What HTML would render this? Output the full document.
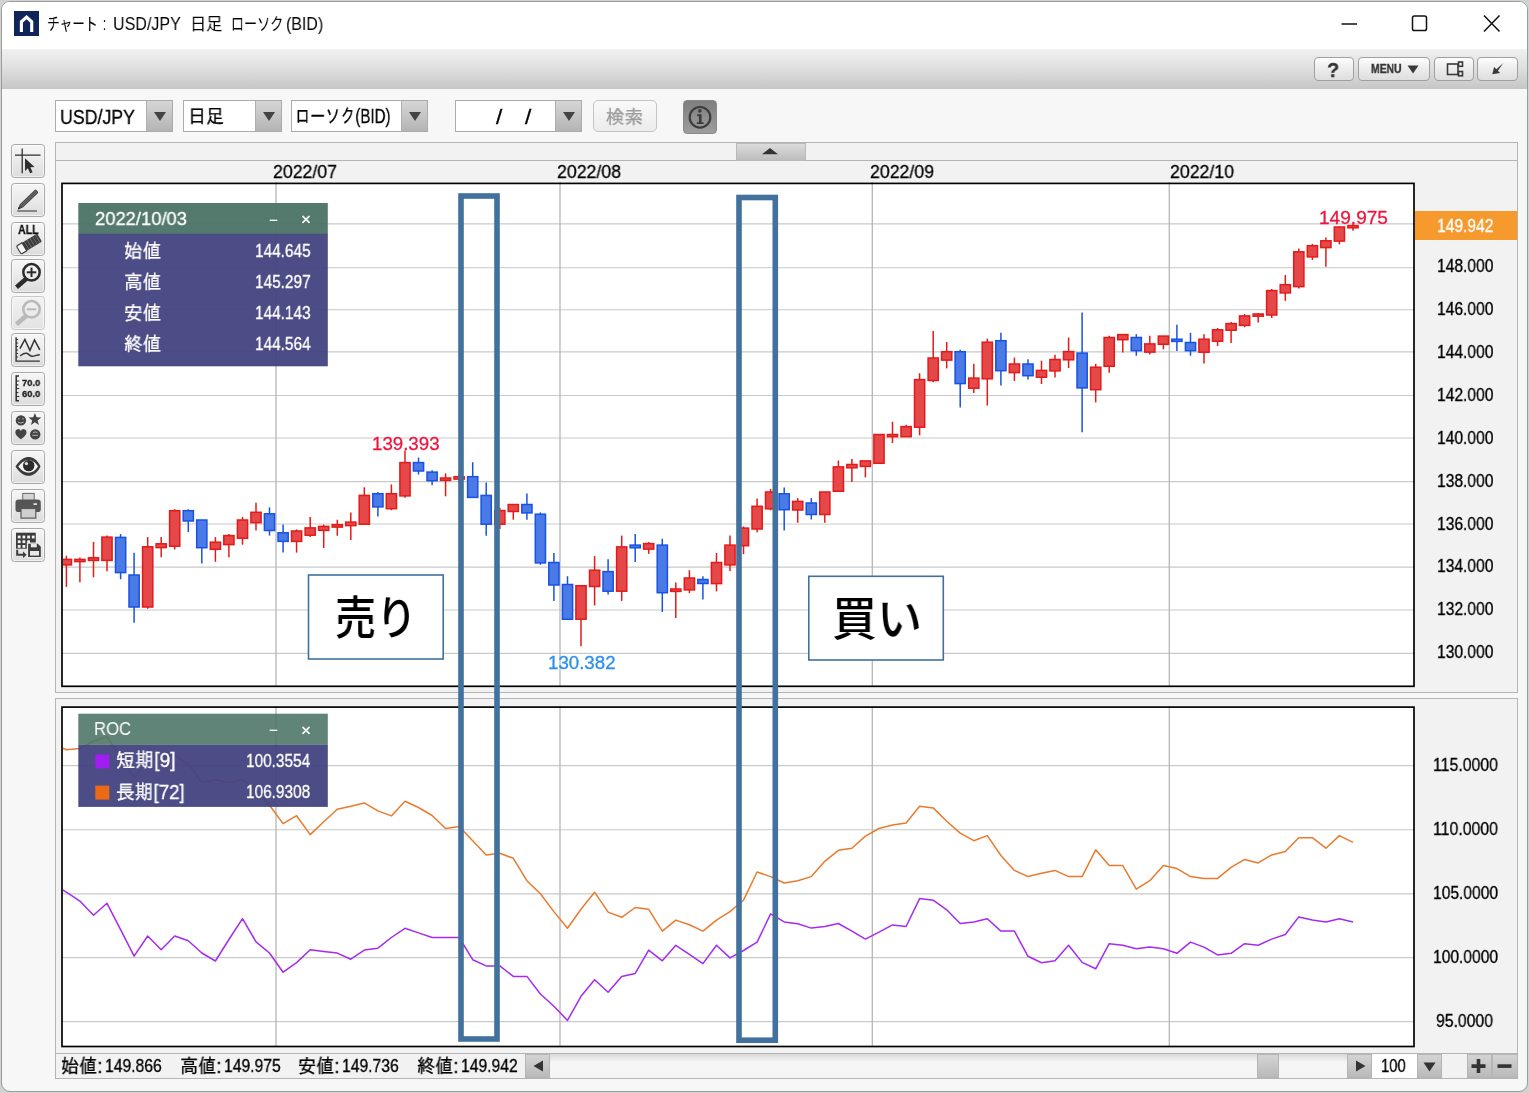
<!DOCTYPE html>
<html lang="ja"><head><meta charset="utf-8"><title>チャート</title>
<style>
html,body{margin:0;padding:0}
body{width:1529px;height:1093px;overflow:hidden;background:#d2d2d2;position:relative;font-family:'Liberation Sans','IPAGothic',sans-serif}
.win{position:absolute;left:1px;top:1px;width:1525px;height:1089px;border:1px solid #9c9c9c;border-radius:9px;background:#f7f7f7;overflow:hidden;box-sizing:content-box}
.abs{position:absolute}
.tx{position:absolute;white-space:pre;transform-origin:0 50%;display:block;will-change:transform}
.title{left:0;top:0;width:1527px;height:47px;background:#fff}
.tbar{left:0;top:47px;width:1527px;height:40px;background:linear-gradient(#f1f1f1,#dfdfdf 48%,#c6c6c6)}
.panel{background:#f2f2f2;border:1px solid #b4b4b4;box-sizing:border-box}
.sel{position:absolute;top:100px;height:32px;background:#fff;border:1px solid #ababab;box-sizing:border-box}
.sel i{position:absolute;right:0;top:0;bottom:0;width:25px;background:linear-gradient(#d6d6d6,#b4b4b4);border-left:1px solid #b0b0b0}
.sel i:after{content:"";position:absolute;left:7px;top:11px;border:6px solid transparent;border-top:9px solid #444;border-bottom:0}
.btn{position:absolute;box-sizing:border-box;border:1px solid #a0a0a0;border-radius:4px;background:linear-gradient(#fdfdfd,#ececec 50%,#dedede)}
.lb{position:absolute;left:11px;width:34px;height:34px;box-sizing:border-box;border:1px solid #a9a9a9;border-radius:3.5px;background:linear-gradient(#f6f6f6,#eaeaea 50%,#dcdcdc);box-shadow:inset 0 0 0 1px rgba(255,255,255,.55)}
.lb.dis{border-color:#c6c6c6;background:linear-gradient(#f2f2f2,#e2e2e2)}
.tx.g{-webkit-text-stroke:0.3px currentColor}
.sb{position:absolute;top:1054px;height:24px;box-sizing:border-box;background:linear-gradient(#d4d4d4,#b9b9b9);border:1px solid #b5b5b5}
</style></head><body>
<div class="win">
<div class="abs title"></div>
<div class="abs tbar"></div>
</div>
<!-- app icon -->
<svg class="abs" style="left:14px;top:11px" width="25" height="25" viewBox="0 0 25 25"><rect width="25" height="25" fill="#10265a"/><path d="M7.400 21V10.800L12.550 6.200L17.700 10.800V21" fill="none" stroke="#fff" stroke-width="3.100" stroke-linejoin="miter"/></svg>
<!-- window controls -->
<svg class="abs" style="left:1330px;top:8px" width="180" height="32" viewBox="0 0 180 32"><g fill="none" stroke="#111" stroke-width="1.5"><path d="M11.5 16H27"/><rect x="82.5" y="8" width="14" height="14.5" rx="1.8"/><path d="M154 7.5L169.5 23.5M169.5 7.5L154 23.5"/></g></svg>
<!-- top right buttons -->
<div class="btn" style="left:1314px;top:57px;width:40px;height:24px"></div>
<div class="btn" style="left:1358px;top:57px;width:72px;height:24px"></div>
<div class="btn" style="left:1434px;top:57px;width:40px;height:24px"></div>
<div class="btn" style="left:1477px;top:57px;width:41px;height:24px"></div>
<svg class="abs" style="left:1400px;top:57px" width="120" height="24" viewBox="0 0 120 24"><path d="M7.500 8.500h11l-5.500 8z" fill="#3a3a3a"/><g fill="none" stroke="#3a3a3a" stroke-width="1.6"><rect x="47.5" y="7" width="10.5" height="10.5"/><rect x="58.5" y="5" width="4" height="4.3"/><rect x="58.5" y="14.5" width="4" height="4.3"/></g><path d="M92.300 17.300l1.800-7.300 2.300 2.300 6.900-6.300-5.400 7.800 2.200 2.200z" fill="#3a3a3a"/></svg>
<!-- selects -->
<div class="sel" style="left:55px;width:118px"><i></i></div>
<div class="sel" style="left:183px;width:99px"><i></i></div>
<div class="sel" style="left:291px;width:137px"><i></i></div>
<div class="sel" style="left:455px;width:127px"><i></i></div>
<div class="btn" style="left:593px;top:100px;width:64px;height:32px;border-color:#c4c4c4;border-radius:5px;background:linear-gradient(#f9f9f9,#ececec)"></div>
<div class="abs" style="left:683px;top:100px;width:34px;height:34px;border-radius:4px;background:linear-gradient(#7e7e7e,#9d9d9d);border:1px solid #8a8a8a;box-sizing:border-box"></div>
<svg class="abs" style="left:683px;top:100px" width="34" height="34" viewBox="0 0 34 34"><circle cx="17" cy="17.3" r="10.3" fill="none" stroke="#3c3c3c" stroke-width="2.2"/><path d="M14 14.2h4.6v8h2v1.8h-6.8v-1.8h2.1v-6.2h-1.9z" fill="#3c3c3c"/><circle cx="16.9" cy="10.9" r="1.8" fill="#3c3c3c"/></svg>
<!-- left toolbar -->
<div class="lb" style="top:144px"><svg width="34" height="34" viewBox="0 0 34 34" style="position:absolute;left:-1px;top:-1px"><g stroke="#2e2e2e" stroke-width="1.3" fill="none"><path d="M4 11.2H29.5M11.2 4.4V29.2"/></g><path d="M14 14.300V27l2.900-2.700 2.200 5 2.500-1.100-2.200-4.900 4.100-.200z" fill="#2e2e2e"/></svg></div><div class="lb" style="top:183px"><svg width="34" height="34" viewBox="0 0 34 34" style="position:absolute;left:-1px;top:-1px"><g transform="translate(6.8,26.4) rotate(-44)"><path d="M0 0L5 -2.3H25.300a1.6 1.6 0 0 1 1.6 1.6V0.700a1.6 1.6 0 0 1 -1.6 1.6H5z" fill="#4a4a4a"/><path d="M5 -0.800H26M5 0.800H26" stroke="#8a8a8a" stroke-width="0.600"/><path d="M0 0L2.6 -1.2V1.2z" fill="#222"/></g><path d="M6.200 28H26" stroke="#555" stroke-width="1.3"/></svg></div><div class="lb" style="top:222px"><svg width="34" height="34" viewBox="0 0 34 34" style="position:absolute;left:-1px;top:-1px"><g transform="translate(17.500,22.300) rotate(-31) scale(1.08,1.3)"><rect x="-10.500" y="-3.600" width="22.500" height="7.200" rx="1.200" fill="#3c3c3c"/><path d="M-2 -3.600V3.600M1 -3.600V3.600M4 -3.600V3.600M7 -3.600V3.600M10 -3.600V3.600" stroke="#777" stroke-width="0.700"/><path d="M-10.500 -2.400a1.200 1.200 0 0 1 1.200 -1.200H-4.500V3.600H-9.300a1.200 1.200 0 0 1 -1.200 -1.200z" fill="#f4f4f4" stroke="#3c3c3c" stroke-width="1"/></g></svg></div><div class="lb" style="top:259px"><svg width="34" height="34" viewBox="0 0 34 34" style="position:absolute;left:-1px;top:-1px"><path d="M15.300 19.800L5.500 28.200" stroke="#2b2b2b" stroke-width="4.600" stroke-linecap="butt"/><circle cx="20.500" cy="13.300" r="8.200" fill="none" stroke="#2b2b2b" stroke-width="2.500"/><path d="M15.800 13.300H25.200" stroke="#2b2b2b" stroke-width="2"/><path d="M20.500 8.600V18" stroke="#2b2b2b" stroke-width="2"/></svg></div><div class="lb dis" style="top:296px"><svg width="34" height="34" viewBox="0 0 34 34" style="position:absolute;left:-1px;top:-1px"><path d="M15.300 19.800L5.500 28.200" stroke="#b9b9b9" stroke-width="4.600" stroke-linecap="butt"/><circle cx="20.500" cy="13.300" r="8.200" fill="none" stroke="#b9b9b9" stroke-width="2.500"/><path d="M15.800 13.300H25.200" stroke="#b9b9b9" stroke-width="2"/></svg></div><div class="lb" style="top:333px"><svg width="34" height="34" viewBox="0 0 34 34" style="position:absolute;left:-1px;top:-1px"><g fill="none" stroke="#333" stroke-width="1.500"><path d="M5.100 4.200V28.100H28.800" stroke-width="1.400"/><path d="M5.100 6.500h2M5.100 10h2M5.100 13.500h2M5.100 17h2M5.100 20.500h2M5.100 24h2" stroke-width="1"/><path d="M9 15.700L13.900 6.400L18.900 17.400L23.500 6.900L28.800 16.800"/><path d="M9 22.900C11 21.500 13 19.800 15.500 20.300S19 23.600 21.500 23.300S26 21.800 28.800 21.800" stroke-width="1.400"/></g></svg></div><div class="lb" style="top:372px"><svg width="34" height="34" viewBox="0 0 34 34" style="position:absolute;left:-1px;top:-1px"><g fill="none" stroke="#2e2e2e"><path d="M8 4H5.200V28.800H8" stroke-width="1.500"/><path d="M5.200 9h3M5.200 12.800h2.200M5.200 16.500h3M5.200 20.500h2.200M5.200 24.500h3" stroke-width="1.200"/></g></svg></div><div class="lb" style="top:411px"><svg width="34" height="34" viewBox="0 0 34 34" style="position:absolute;left:-1px;top:-1px"><g transform="translate(0,-2.700)"><g fill="#444"><circle cx="9.900" cy="12.100" r="5.200"/><path d="M23.900 4.600l1.700 4.400 4.700.2-3.700 2.900 1.300 4.500-4-2.600-4 2.600 1.300-4.500-3.700-2.900 4.700-.2z"/><path d="M9.900 31c-3.500-2.700-5.600-4.700-5.600-7.100a2.900 2.900 0 0 1 5.600-1.200a2.900 2.900 0 0 1 5.600 1.200c0 2.400-2.100 4.400-5.600 7.100z"/><circle cx="24.200" cy="26.100" r="5.200"/></g><g stroke="#bdbdbd" stroke-width="0.900" fill="none"><path d="M7 13.800q2.900 2 5.800 0M7 10.500h1.600M11.200 10.500h1.600"/><path d="M21.300 27h5.800M22 24.300q2.200-1.400 4.400 0"/></g></g></svg></div><div class="lb" style="top:450px"><svg width="34" height="34" viewBox="0 0 34 34" style="position:absolute;left:-1px;top:-1px"><path d="M4.500 16.500C9 9.200 14 7 17.500 7S26.500 9.200 29.500 16.500C26.500 22.800 22 25.800 17.500 25.800S8.500 22.800 4.500 16.500z" fill="#3a3a3a"/><path d="M7.300 16.600C10.500 12 14 10.300 17.500 10.300S24.500 12 27 16.600C24.500 20.800 21 22.800 17.500 22.800S10.500 20.800 7.300 16.600z" fill="#f4f4f4"/><circle cx="17.700" cy="15.600" r="5.700" fill="#2c2c2c"/><circle cx="15.400" cy="13.600" r="1.700" fill="#ddd"/></svg></div><div class="lb" style="top:489px"><svg width="34" height="34" viewBox="0 0 34 34" style="position:absolute;left:-1px;top:-1px"><rect x="11.700" y="4.400" width="11.500" height="9" fill="#d4d4d4" stroke="#6a6a6a" stroke-width="1"/><rect x="4.500" y="10.600" width="25.300" height="12.500" rx="3.200" fill="#555"/><rect x="10" y="19.500" width="14.800" height="9.600" fill="#cfcfcf" stroke="#5a5a5a" stroke-width="1.200"/><rect x="22.500" y="14.300" width="3.500" height="1.600" fill="#eee"/></svg></div><div class="lb" style="top:528px"><svg width="34" height="34" viewBox="0 0 34 34" style="position:absolute;left:-1px;top:-1px"><rect x="5" y="4.700" width="19.800" height="16" fill="#3c3c3c"/><g fill="#f2f2f2"><rect x="6.800" y="7.600" width="2.800" height="2.800"/><rect x="11.500" y="7.600" width="2.800" height="2.800"/><rect x="16.200" y="7.600" width="2.800" height="2.800"/><rect x="20.800" y="7.600" width="2.800" height="2.800"/><rect x="6.800" y="12.300" width="2.800" height="2.800"/><rect x="11.500" y="12.300" width="2.800" height="2.800"/><rect x="16.200" y="12.300" width="2.800" height="2.800"/><rect x="6.800" y="17" width="2.800" height="2.800"/><rect x="11.500" y="17" width="2.800" height="2.800"/></g><rect x="15.800" y="14.500" width="15" height="15.500" fill="#ececec"/><path d="M17.100 15.700h9.700l3 3v10.200h-12.700z" fill="#3c3c3c"/><rect x="19.800" y="15.700" width="6" height="3.600" fill="#e8e8e8"/><rect x="19" y="23" width="9" height="4.600" fill="#e8e8e8"/><path d="M7.200 21.800v4h4.800v-2.300l3.600 3.300-3.600 3.300v-2.300H5.200v-6z" fill="#3c3c3c"/></svg></div>
<!-- panels -->
<div class="abs panel" style="left:55px;top:142px;width:1463px;height:551px"></div>
<div class="abs" style="left:56px;top:160px;width:1461px;height:1px;background:#b4b4b4"></div>
<div class="abs" style="left:736px;top:143px;width:70px;height:18px;background:linear-gradient(#dcdcdc,#bdbdbd);border:1px solid #b9b9b9;box-sizing:border-box"></div>
<svg class="abs" style="left:758px;top:145px" width="24" height="12" viewBox="0 0 24 12"><path d="M4 9.300L12 2.900L20 9.300z" fill="#333"/></svg>
<div class="abs panel" style="left:55px;top:698px;width:1463px;height:355px;border-bottom:0"></div>
<div class="abs" style="left:1415px;top:211px;width:102px;height:29px;background:#f79a2e"></div>
<!-- status/scroll bar -->
<div class="abs panel" style="left:55px;top:1053px;width:1463px;height:26px"></div>
<div class="abs" style="left:550px;top:1054px;width:798px;height:24px;background:linear-gradient(#d9d9d9,#f6f6f6 35%,#f4f4f4)"></div>
<div class="sb" style="left:525px;width:25px"></div>
<div class="sb" style="left:1257px;width:22px"></div>
<div class="sb" style="left:1347px;width:25px"></div>
<div class="abs" style="left:1372px;top:1054px;width:45px;height:24px;background:#fff"></div>
<div class="sb" style="left:1417px;width:25px"></div>
<div class="sb" style="left:1467px;width:25px"></div>
<div class="sb" style="left:1492px;width:26px"></div>
<svg class="abs" style="left:525px;top:1054px" width="993" height="24" viewBox="0 0 993 24"><g fill="#333"><path d="M18 6.5v11l-9.5-5.5z"/><path d="M831 6.5v11l9.5-5.500z"/><path d="M898.500 8.500h12l-6 9z"/><path d="M946.500 10.300h5.200v-5.200h3.600v5.200h5.200v3.600h-5.200v5.200h-3.600v-5.200h-5.200z"/><rect x="972.500" y="10.300" width="14" height="3.600"/></g></svg>
<!-- charts -->
<svg class="abs" style="left:0;top:0;z-index:2" width="1529" height="1093" viewBox="0 0 1529 1093">
<defs><clipPath id="c1"><rect x="63" y="184" width="1351" height="502"/></clipPath><clipPath id="c2"><rect x="63" y="708" width="1351" height="338"/></clipPath></defs>
<rect x="61" y="182" width="1354" height="505" fill="#fff"/>
<line x1="61" x2="1415" y1="653.3" y2="653.3" stroke="#c9c9c9" stroke-width="1.15"/>
<line x1="61" x2="1415" y1="610.0" y2="610.0" stroke="#c9c9c9" stroke-width="1.15"/>
<line x1="61" x2="1415" y1="567.1" y2="567.1" stroke="#c9c9c9" stroke-width="1.15"/>
<line x1="61" x2="1415" y1="524.0" y2="524.0" stroke="#c9c9c9" stroke-width="1.15"/>
<line x1="61" x2="1415" y1="481.6" y2="481.6" stroke="#c9c9c9" stroke-width="1.15"/>
<line x1="61" x2="1415" y1="438.0" y2="438.0" stroke="#c9c9c9" stroke-width="1.15"/>
<line x1="61" x2="1415" y1="395.5" y2="395.5" stroke="#c9c9c9" stroke-width="1.15"/>
<line x1="61" x2="1415" y1="351.9" y2="351.9" stroke="#c9c9c9" stroke-width="1.15"/>
<line x1="61" x2="1415" y1="309.7" y2="309.7" stroke="#c9c9c9" stroke-width="1.15"/>
<line x1="61" x2="1415" y1="267.7" y2="267.7" stroke="#c9c9c9" stroke-width="1.15"/>
<line x1="61" x2="1415" y1="223.9" y2="223.9" stroke="#c9c9c9" stroke-width="1.15"/>
<line x1="276.0" x2="276.0" y1="182" y2="687" stroke="#b6b6b6" stroke-width="1.3"/>
<line x1="560.0" x2="560.0" y1="182" y2="687" stroke="#b6b6b6" stroke-width="1.3"/>
<line x1="872.3" x2="872.3" y1="182" y2="687" stroke="#b6b6b6" stroke-width="1.3"/>
<line x1="1169.3" x2="1169.3" y1="182" y2="687" stroke="#b6b6b6" stroke-width="1.3"/>
<rect x="61" y="706" width="1354" height="341" fill="#fff"/>
<line x1="61" x2="1415" y1="765.6" y2="765.6" stroke="#c9c9c9" stroke-width="1.15"/>
<line x1="61" x2="1415" y1="829.7" y2="829.7" stroke="#c9c9c9" stroke-width="1.15"/>
<line x1="61" x2="1415" y1="893.8" y2="893.8" stroke="#c9c9c9" stroke-width="1.15"/>
<line x1="61" x2="1415" y1="957.6" y2="957.6" stroke="#c9c9c9" stroke-width="1.15"/>
<line x1="61" x2="1415" y1="1021.6" y2="1021.6" stroke="#c9c9c9" stroke-width="1.15"/>
<line x1="276.0" x2="276.0" y1="706" y2="1047" stroke="#b6b6b6" stroke-width="1.3"/>
<line x1="560.0" x2="560.0" y1="706" y2="1047" stroke="#b6b6b6" stroke-width="1.3"/>
<line x1="872.3" x2="872.3" y1="706" y2="1047" stroke="#b6b6b6" stroke-width="1.3"/>
<line x1="1169.3" x2="1169.3" y1="706" y2="1047" stroke="#b6b6b6" stroke-width="1.3"/>
<g clip-path="url(#c1)">
<line x1="66.4" x2="66.4" y1="555.7" y2="586.9" stroke="#e41a1a" stroke-width="1.5"/>
<rect x="61.3" y="559.4" width="10.2" height="5.5" fill="#e44848" stroke="#e41a1a" stroke-width="1.5"/>
<line x1="79.9" x2="79.9" y1="557.6" y2="582.3" stroke="#e41a1a" stroke-width="1.5"/>
<rect x="74.8" y="559.4" width="10.2" height="2.2" fill="#e44848" stroke="#e41a1a" stroke-width="1.5"/>
<line x1="93.5" x2="93.5" y1="541.8" y2="577.3" stroke="#e41a1a" stroke-width="1.5"/>
<rect x="88.4" y="557.8" width="10.2" height="2.6" fill="#e44848" stroke="#e41a1a" stroke-width="1.5"/>
<line x1="107.0" x2="107.0" y1="535.6" y2="571.3" stroke="#e41a1a" stroke-width="1.5"/>
<rect x="101.9" y="537.1" width="10.2" height="23.3" fill="#e44848" stroke="#e41a1a" stroke-width="1.5"/>
<line x1="120.6" x2="120.6" y1="534.1" y2="579.2" stroke="#1852e4" stroke-width="1.5"/>
<rect x="115.5" y="537.4" width="10.2" height="35.2" fill="#4a7ae5" stroke="#1852e4" stroke-width="1.5"/>
<line x1="134.1" x2="134.1" y1="552.8" y2="622.8" stroke="#1852e4" stroke-width="1.5"/>
<rect x="129.0" y="575.0" width="10.2" height="32.0" fill="#4a7ae5" stroke="#1852e4" stroke-width="1.5"/>
<line x1="147.7" x2="147.7" y1="537.1" y2="608.8" stroke="#e41a1a" stroke-width="1.5"/>
<rect x="142.6" y="546.8" width="10.2" height="60.2" fill="#e44848" stroke="#e41a1a" stroke-width="1.5"/>
<line x1="161.2" x2="161.2" y1="537.1" y2="557.2" stroke="#e41a1a" stroke-width="1.5"/>
<rect x="156.1" y="543.8" width="10.2" height="3.8" fill="#e44848" stroke="#e41a1a" stroke-width="1.5"/>
<line x1="174.7" x2="174.7" y1="509.2" y2="549.5" stroke="#e41a1a" stroke-width="1.5"/>
<rect x="169.6" y="510.7" width="10.2" height="35.5" fill="#e44848" stroke="#e41a1a" stroke-width="1.5"/>
<line x1="188.3" x2="188.3" y1="509.2" y2="532.1" stroke="#1852e4" stroke-width="1.5"/>
<rect x="183.2" y="510.7" width="10.2" height="10.3" fill="#4a7ae5" stroke="#1852e4" stroke-width="1.5"/>
<line x1="201.8" x2="201.8" y1="520.0" y2="563.6" stroke="#1852e4" stroke-width="1.5"/>
<rect x="196.7" y="520.0" width="10.2" height="27.7" fill="#4a7ae5" stroke="#1852e4" stroke-width="1.5"/>
<line x1="215.4" x2="215.4" y1="537.1" y2="561.8" stroke="#e41a1a" stroke-width="1.5"/>
<rect x="210.3" y="542.2" width="10.2" height="7.1" fill="#e44848" stroke="#e41a1a" stroke-width="1.5"/>
<line x1="228.9" x2="228.9" y1="534.1" y2="557.2" stroke="#e41a1a" stroke-width="1.5"/>
<rect x="223.8" y="535.6" width="10.2" height="9.0" fill="#e44848" stroke="#e41a1a" stroke-width="1.5"/>
<line x1="242.5" x2="242.5" y1="516.9" y2="544.7" stroke="#e41a1a" stroke-width="1.5"/>
<rect x="237.4" y="520.0" width="10.2" height="18.3" fill="#e44848" stroke="#e41a1a" stroke-width="1.5"/>
<line x1="256.0" x2="256.0" y1="502.8" y2="530.6" stroke="#e41a1a" stroke-width="1.5"/>
<rect x="250.9" y="512.3" width="10.2" height="10.4" fill="#e44848" stroke="#e41a1a" stroke-width="1.5"/>
<line x1="269.5" x2="269.5" y1="507.4" y2="535.6" stroke="#1852e4" stroke-width="1.5"/>
<rect x="264.4" y="513.8" width="10.2" height="16.7" fill="#4a7ae5" stroke="#1852e4" stroke-width="1.5"/>
<line x1="283.1" x2="283.1" y1="524.6" y2="552.6" stroke="#1852e4" stroke-width="1.5"/>
<rect x="278.0" y="532.8" width="10.2" height="8.6" fill="#4a7ae5" stroke="#1852e4" stroke-width="1.5"/>
<line x1="296.6" x2="296.6" y1="529.4" y2="552.6" stroke="#e41a1a" stroke-width="1.5"/>
<rect x="291.5" y="531.0" width="10.2" height="10.4" fill="#e44848" stroke="#e41a1a" stroke-width="1.5"/>
<line x1="310.2" x2="310.2" y1="516.9" y2="537.1" stroke="#e41a1a" stroke-width="1.5"/>
<rect x="305.1" y="527.9" width="10.2" height="7.3" fill="#e44848" stroke="#e41a1a" stroke-width="1.5"/>
<line x1="323.7" x2="323.7" y1="524.6" y2="548.0" stroke="#e41a1a" stroke-width="1.5"/>
<rect x="318.6" y="526.4" width="10.2" height="4.0" fill="#e44848" stroke="#e41a1a" stroke-width="1.5"/>
<line x1="337.3" x2="337.3" y1="519.7" y2="535.7" stroke="#e41a1a" stroke-width="1.5"/>
<rect x="332.2" y="524.7" width="10.2" height="2.4" fill="#e44848" stroke="#e41a1a" stroke-width="1.5"/>
<line x1="350.8" x2="350.8" y1="512.4" y2="539.9" stroke="#e41a1a" stroke-width="1.5"/>
<rect x="345.7" y="522.1" width="10.2" height="3.5" fill="#e44848" stroke="#e41a1a" stroke-width="1.5"/>
<line x1="364.3" x2="364.3" y1="487.3" y2="524.1" stroke="#e41a1a" stroke-width="1.5"/>
<rect x="359.2" y="495.4" width="10.2" height="28.8" fill="#e44848" stroke="#e41a1a" stroke-width="1.5"/>
<line x1="377.9" x2="377.9" y1="491.9" y2="516.4" stroke="#1852e4" stroke-width="1.5"/>
<rect x="372.8" y="493.7" width="10.2" height="13.2" fill="#4a7ae5" stroke="#1852e4" stroke-width="1.5"/>
<line x1="391.4" x2="391.4" y1="484.4" y2="510.2" stroke="#e41a1a" stroke-width="1.5"/>
<rect x="386.3" y="493.7" width="10.2" height="15.0" fill="#e44848" stroke="#e41a1a" stroke-width="1.5"/>
<line x1="405.0" x2="405.0" y1="450.5" y2="497.8" stroke="#e41a1a" stroke-width="1.5"/>
<rect x="399.9" y="462.6" width="10.2" height="33.3" fill="#e44848" stroke="#e41a1a" stroke-width="1.5"/>
<line x1="418.5" x2="418.5" y1="457.5" y2="474.5" stroke="#1852e4" stroke-width="1.5"/>
<rect x="413.4" y="462.6" width="10.2" height="8.4" fill="#4a7ae5" stroke="#1852e4" stroke-width="1.5"/>
<line x1="432.1" x2="432.1" y1="470.3" y2="485.3" stroke="#1852e4" stroke-width="1.5"/>
<rect x="427.0" y="472.1" width="10.2" height="8.6" fill="#4a7ae5" stroke="#1852e4" stroke-width="1.5"/>
<line x1="445.6" x2="445.6" y1="473.4" y2="496.3" stroke="#e41a1a" stroke-width="1.5"/>
<rect x="440.5" y="478.0" width="10.2" height="2.4" fill="#e44848" stroke="#e41a1a" stroke-width="1.5"/>
<line x1="459.1" x2="459.1" y1="474.0" y2="483.1" stroke="#e41a1a" stroke-width="1.5"/>
<rect x="454.0" y="476.7" width="10.2" height="2.4" fill="#e44848" stroke="#e41a1a" stroke-width="1.5"/>
<line x1="472.7" x2="472.7" y1="462.2" y2="497.4" stroke="#1852e4" stroke-width="1.5"/>
<rect x="467.6" y="476.7" width="10.2" height="20.7" fill="#4a7ae5" stroke="#1852e4" stroke-width="1.5"/>
<line x1="486.2" x2="486.2" y1="482.6" y2="535.7" stroke="#1852e4" stroke-width="1.5"/>
<rect x="481.1" y="495.4" width="10.2" height="28.8" fill="#4a7ae5" stroke="#1852e4" stroke-width="1.5"/>
<line x1="499.8" x2="499.8" y1="507.8" y2="528.9" stroke="#e41a1a" stroke-width="1.5"/>
<rect x="494.7" y="510.6" width="10.2" height="13.6" fill="#e44848" stroke="#e41a1a" stroke-width="1.5"/>
<line x1="513.3" x2="513.3" y1="504.5" y2="519.7" stroke="#e41a1a" stroke-width="1.5"/>
<rect x="508.2" y="504.5" width="10.2" height="7.0" fill="#e44848" stroke="#e41a1a" stroke-width="1.5"/>
<line x1="526.9" x2="526.9" y1="493.5" y2="519.7" stroke="#1852e4" stroke-width="1.5"/>
<rect x="521.8" y="504.5" width="10.2" height="8.4" fill="#4a7ae5" stroke="#1852e4" stroke-width="1.5"/>
<line x1="540.4" x2="540.4" y1="512.4" y2="564.8" stroke="#1852e4" stroke-width="1.5"/>
<rect x="535.3" y="514.2" width="10.2" height="48.7" fill="#4a7ae5" stroke="#1852e4" stroke-width="1.5"/>
<line x1="553.9" x2="553.9" y1="553.0" y2="600.9" stroke="#1852e4" stroke-width="1.5"/>
<rect x="548.8" y="562.5" width="10.2" height="22.5" fill="#4a7ae5" stroke="#1852e4" stroke-width="1.5"/>
<line x1="567.5" x2="567.5" y1="576.2" y2="619.2" stroke="#1852e4" stroke-width="1.5"/>
<rect x="562.4" y="584.5" width="10.2" height="34.8" fill="#4a7ae5" stroke="#1852e4" stroke-width="1.5"/>
<line x1="581.0" x2="581.0" y1="585.7" y2="646.2" stroke="#e41a1a" stroke-width="1.5"/>
<rect x="575.9" y="585.7" width="10.2" height="33.5" fill="#e44848" stroke="#e41a1a" stroke-width="1.5"/>
<line x1="594.6" x2="594.6" y1="556.1" y2="605.5" stroke="#e41a1a" stroke-width="1.5"/>
<rect x="589.5" y="570.2" width="10.2" height="16.3" fill="#e44848" stroke="#e41a1a" stroke-width="1.5"/>
<line x1="608.1" x2="608.1" y1="559.2" y2="594.5" stroke="#1852e4" stroke-width="1.5"/>
<rect x="603.0" y="571.6" width="10.2" height="19.6" fill="#4a7ae5" stroke="#1852e4" stroke-width="1.5"/>
<line x1="621.7" x2="621.7" y1="535.6" y2="600.9" stroke="#e41a1a" stroke-width="1.5"/>
<rect x="616.6" y="546.9" width="10.2" height="44.3" fill="#e44848" stroke="#e41a1a" stroke-width="1.5"/>
<line x1="635.2" x2="635.2" y1="534.1" y2="561.9" stroke="#1852e4" stroke-width="1.5"/>
<rect x="630.1" y="545.1" width="10.2" height="2.7" fill="#4a7ae5" stroke="#1852e4" stroke-width="1.5"/>
<line x1="648.7" x2="648.7" y1="542.0" y2="553.9" stroke="#e41a1a" stroke-width="1.5"/>
<rect x="643.6" y="543.6" width="10.2" height="5.5" fill="#e44848" stroke="#e41a1a" stroke-width="1.5"/>
<line x1="662.3" x2="662.3" y1="538.7" y2="611.9" stroke="#1852e4" stroke-width="1.5"/>
<rect x="657.2" y="545.1" width="10.2" height="47.6" fill="#4a7ae5" stroke="#1852e4" stroke-width="1.5"/>
<line x1="675.8" x2="675.8" y1="582.6" y2="618.0" stroke="#e41a1a" stroke-width="1.5"/>
<rect x="670.7" y="589.0" width="10.2" height="2.4" fill="#e44848" stroke="#e41a1a" stroke-width="1.5"/>
<line x1="689.4" x2="689.4" y1="570.2" y2="593.1" stroke="#e41a1a" stroke-width="1.5"/>
<rect x="684.3" y="578.0" width="10.2" height="11.9" fill="#e44848" stroke="#e41a1a" stroke-width="1.5"/>
<line x1="702.9" x2="702.9" y1="576.2" y2="599.5" stroke="#1852e4" stroke-width="1.5"/>
<rect x="697.8" y="579.5" width="10.2" height="4.0" fill="#4a7ae5" stroke="#1852e4" stroke-width="1.5"/>
<line x1="716.5" x2="716.5" y1="553.0" y2="591.4" stroke="#e41a1a" stroke-width="1.5"/>
<rect x="711.4" y="562.5" width="10.2" height="21.1" fill="#e44848" stroke="#e41a1a" stroke-width="1.5"/>
<line x1="730.0" x2="730.0" y1="535.6" y2="571.1" stroke="#e41a1a" stroke-width="1.5"/>
<rect x="724.9" y="545.1" width="10.2" height="19.8" fill="#e44848" stroke="#e41a1a" stroke-width="1.5"/>
<line x1="743.5" x2="743.5" y1="526.4" y2="554.2" stroke="#e41a1a" stroke-width="1.5"/>
<rect x="738.4" y="528.1" width="10.2" height="17.6" fill="#e44848" stroke="#e41a1a" stroke-width="1.5"/>
<line x1="757.1" x2="757.1" y1="498.4" y2="532.3" stroke="#e41a1a" stroke-width="1.5"/>
<rect x="752.0" y="506.3" width="10.2" height="22.7" fill="#e44848" stroke="#e41a1a" stroke-width="1.5"/>
<line x1="770.6" x2="770.6" y1="488.9" y2="510.3" stroke="#e41a1a" stroke-width="1.5"/>
<rect x="765.5" y="492.0" width="10.2" height="16.8" fill="#e44848" stroke="#e41a1a" stroke-width="1.5"/>
<line x1="784.2" x2="784.2" y1="487.4" y2="530.4" stroke="#1852e4" stroke-width="1.5"/>
<rect x="779.1" y="493.8" width="10.2" height="15.9" fill="#4a7ae5" stroke="#1852e4" stroke-width="1.5"/>
<line x1="797.7" x2="797.7" y1="498.1" y2="522.8" stroke="#e41a1a" stroke-width="1.5"/>
<rect x="792.6" y="501.4" width="10.2" height="8.6" fill="#e44848" stroke="#e41a1a" stroke-width="1.5"/>
<line x1="811.3" x2="811.3" y1="498.1" y2="519.5" stroke="#1852e4" stroke-width="1.5"/>
<rect x="806.2" y="503.0" width="10.2" height="11.5" fill="#4a7ae5" stroke="#1852e4" stroke-width="1.5"/>
<line x1="824.8" x2="824.8" y1="492.0" y2="522.8" stroke="#e41a1a" stroke-width="1.5"/>
<rect x="819.7" y="492.0" width="10.2" height="22.5" fill="#e44848" stroke="#e41a1a" stroke-width="1.5"/>
<line x1="838.4" x2="838.4" y1="460.5" y2="491.3" stroke="#e41a1a" stroke-width="1.5"/>
<rect x="833.3" y="466.9" width="10.2" height="24.4" fill="#e44848" stroke="#e41a1a" stroke-width="1.5"/>
<line x1="851.9" x2="851.9" y1="459.0" y2="482.1" stroke="#e41a1a" stroke-width="1.5"/>
<rect x="846.8" y="464.5" width="10.2" height="3.3" fill="#e44848" stroke="#e41a1a" stroke-width="1.5"/>
<line x1="865.4" x2="865.4" y1="460.9" y2="477.5" stroke="#e41a1a" stroke-width="1.5"/>
<rect x="860.3" y="460.9" width="10.2" height="5.5" fill="#e44848" stroke="#e41a1a" stroke-width="1.5"/>
<line x1="879.0" x2="879.0" y1="434.5" y2="463.3" stroke="#e41a1a" stroke-width="1.5"/>
<rect x="873.9" y="434.5" width="10.2" height="28.8" fill="#e44848" stroke="#e41a1a" stroke-width="1.5"/>
<line x1="892.5" x2="892.5" y1="421.7" y2="443.1" stroke="#e41a1a" stroke-width="1.5"/>
<rect x="887.4" y="434.5" width="10.2" height="2.2" fill="#e44848" stroke="#e41a1a" stroke-width="1.5"/>
<line x1="906.1" x2="906.1" y1="424.8" y2="436.7" stroke="#e41a1a" stroke-width="1.5"/>
<rect x="901.0" y="426.6" width="10.2" height="10.1" fill="#e44848" stroke="#e41a1a" stroke-width="1.5"/>
<line x1="919.6" x2="919.6" y1="373.2" y2="435.4" stroke="#e41a1a" stroke-width="1.5"/>
<rect x="914.5" y="379.6" width="10.2" height="47.6" fill="#e44848" stroke="#e41a1a" stroke-width="1.5"/>
<line x1="933.2" x2="933.2" y1="331.0" y2="382.3" stroke="#e41a1a" stroke-width="1.5"/>
<rect x="928.1" y="358.0" width="10.2" height="22.5" fill="#e44848" stroke="#e41a1a" stroke-width="1.5"/>
<line x1="946.7" x2="946.7" y1="342.0" y2="368.4" stroke="#e41a1a" stroke-width="1.5"/>
<rect x="941.6" y="351.7" width="10.2" height="8.4" fill="#e44848" stroke="#e41a1a" stroke-width="1.5"/>
<line x1="960.2" x2="960.2" y1="349.7" y2="407.4" stroke="#1852e4" stroke-width="1.5"/>
<rect x="955.1" y="351.7" width="10.2" height="31.9" fill="#4a7ae5" stroke="#1852e4" stroke-width="1.5"/>
<line x1="973.8" x2="973.8" y1="363.8" y2="393.1" stroke="#e41a1a" stroke-width="1.5"/>
<rect x="968.7" y="378.1" width="10.2" height="10.1" fill="#e44848" stroke="#e41a1a" stroke-width="1.5"/>
<line x1="987.3" x2="987.3" y1="338.7" y2="405.6" stroke="#e41a1a" stroke-width="1.5"/>
<rect x="982.2" y="342.2" width="10.2" height="36.6" fill="#e44848" stroke="#e41a1a" stroke-width="1.5"/>
<line x1="1000.9" x2="1000.9" y1="332.7" y2="385.4" stroke="#1852e4" stroke-width="1.5"/>
<rect x="995.8" y="340.7" width="10.2" height="30.0" fill="#4a7ae5" stroke="#1852e4" stroke-width="1.5"/>
<line x1="1014.4" x2="1014.4" y1="357.6" y2="380.9" stroke="#e41a1a" stroke-width="1.5"/>
<rect x="1009.3" y="364.0" width="10.2" height="8.6" fill="#e44848" stroke="#e41a1a" stroke-width="1.5"/>
<line x1="1028.0" x2="1028.0" y1="359.2" y2="379.4" stroke="#1852e4" stroke-width="1.5"/>
<rect x="1022.9" y="364.0" width="10.2" height="11.7" fill="#4a7ae5" stroke="#1852e4" stroke-width="1.5"/>
<line x1="1041.5" x2="1041.5" y1="360.7" y2="384.0" stroke="#e41a1a" stroke-width="1.5"/>
<rect x="1036.4" y="370.4" width="10.2" height="6.8" fill="#e44848" stroke="#e41a1a" stroke-width="1.5"/>
<line x1="1055.0" x2="1055.0" y1="354.7" y2="377.6" stroke="#e41a1a" stroke-width="1.5"/>
<rect x="1049.9" y="359.5" width="10.2" height="11.4" fill="#e44848" stroke="#e41a1a" stroke-width="1.5"/>
<line x1="1068.6" x2="1068.6" y1="337.5" y2="368.1" stroke="#e41a1a" stroke-width="1.5"/>
<rect x="1063.5" y="351.6" width="10.2" height="8.2" fill="#e44848" stroke="#e41a1a" stroke-width="1.5"/>
<line x1="1082.1" x2="1082.1" y1="312.6" y2="432.2" stroke="#1852e4" stroke-width="1.5"/>
<rect x="1077.0" y="353.1" width="10.2" height="34.8" fill="#4a7ae5" stroke="#1852e4" stroke-width="1.5"/>
<line x1="1095.7" x2="1095.7" y1="363.9" y2="402.4" stroke="#e41a1a" stroke-width="1.5"/>
<rect x="1090.6" y="367.2" width="10.2" height="22.5" fill="#e44848" stroke="#e41a1a" stroke-width="1.5"/>
<line x1="1109.2" x2="1109.2" y1="335.7" y2="372.7" stroke="#e41a1a" stroke-width="1.5"/>
<rect x="1104.1" y="337.5" width="10.2" height="28.8" fill="#e44848" stroke="#e41a1a" stroke-width="1.5"/>
<line x1="1122.8" x2="1122.8" y1="334.2" y2="352.6" stroke="#e41a1a" stroke-width="1.5"/>
<rect x="1117.7" y="334.6" width="10.2" height="5.1" fill="#e44848" stroke="#e41a1a" stroke-width="1.5"/>
<line x1="1136.3" x2="1136.3" y1="334.2" y2="355.7" stroke="#1852e4" stroke-width="1.5"/>
<rect x="1131.2" y="337.5" width="10.2" height="13.2" fill="#4a7ae5" stroke="#1852e4" stroke-width="1.5"/>
<line x1="1149.8" x2="1149.8" y1="335.7" y2="354.4" stroke="#e41a1a" stroke-width="1.5"/>
<rect x="1144.7" y="343.9" width="10.2" height="8.2" fill="#e44848" stroke="#e41a1a" stroke-width="1.5"/>
<line x1="1163.4" x2="1163.4" y1="336.1" y2="349.4" stroke="#e41a1a" stroke-width="1.5"/>
<rect x="1158.3" y="336.1" width="10.2" height="8.2" fill="#e44848" stroke="#e41a1a" stroke-width="1.5"/>
<line x1="1176.9" x2="1176.9" y1="324.7" y2="351.1" stroke="#1852e4" stroke-width="1.5"/>
<rect x="1171.8" y="339.2" width="10.2" height="2.2" fill="#4a7ae5" stroke="#1852e4" stroke-width="1.5"/>
<line x1="1190.5" x2="1190.5" y1="332.8" y2="355.7" stroke="#1852e4" stroke-width="1.5"/>
<rect x="1185.4" y="342.5" width="10.2" height="8.2" fill="#4a7ae5" stroke="#1852e4" stroke-width="1.5"/>
<line x1="1204.0" x2="1204.0" y1="334.2" y2="363.5" stroke="#e41a1a" stroke-width="1.5"/>
<rect x="1198.9" y="339.2" width="10.2" height="13.0" fill="#e44848" stroke="#e41a1a" stroke-width="1.5"/>
<line x1="1217.6" x2="1217.6" y1="328.0" y2="346.1" stroke="#e41a1a" stroke-width="1.5"/>
<rect x="1212.5" y="329.8" width="10.2" height="11.4" fill="#e44848" stroke="#e41a1a" stroke-width="1.5"/>
<line x1="1231.1" x2="1231.1" y1="322.0" y2="343.0" stroke="#e41a1a" stroke-width="1.5"/>
<rect x="1226.0" y="323.6" width="10.2" height="6.6" fill="#e44848" stroke="#e41a1a" stroke-width="1.5"/>
<line x1="1244.6" x2="1244.6" y1="314.1" y2="327.3" stroke="#e41a1a" stroke-width="1.5"/>
<rect x="1239.5" y="315.9" width="10.2" height="9.5" fill="#e44848" stroke="#e41a1a" stroke-width="1.5"/>
<line x1="1258.2" x2="1258.2" y1="313.1" y2="322.6" stroke="#e41a1a" stroke-width="1.5"/>
<rect x="1253.1" y="314.0" width="10.2" height="2.2" fill="#e44848" stroke="#e41a1a" stroke-width="1.5"/>
<line x1="1271.7" x2="1271.7" y1="288.9" y2="318.1" stroke="#e41a1a" stroke-width="1.5"/>
<rect x="1266.6" y="290.6" width="10.2" height="24.4" fill="#e44848" stroke="#e41a1a" stroke-width="1.5"/>
<line x1="1285.3" x2="1285.3" y1="275.0" y2="300.8" stroke="#e41a1a" stroke-width="1.5"/>
<rect x="1280.2" y="284.7" width="10.2" height="8.2" fill="#e44848" stroke="#e41a1a" stroke-width="1.5"/>
<line x1="1298.8" x2="1298.8" y1="248.5" y2="288.4" stroke="#e41a1a" stroke-width="1.5"/>
<rect x="1293.7" y="251.8" width="10.2" height="34.8" fill="#e44848" stroke="#e41a1a" stroke-width="1.5"/>
<line x1="1312.4" x2="1312.4" y1="243.9" y2="260.0" stroke="#e41a1a" stroke-width="1.5"/>
<rect x="1307.3" y="245.7" width="10.2" height="11.2" fill="#e44848" stroke="#e41a1a" stroke-width="1.5"/>
<line x1="1325.9" x2="1325.9" y1="237.5" y2="266.8" stroke="#e41a1a" stroke-width="1.5"/>
<rect x="1320.8" y="240.8" width="10.2" height="6.8" fill="#e44848" stroke="#e41a1a" stroke-width="1.5"/>
<line x1="1339.4" x2="1339.4" y1="226.5" y2="244.4" stroke="#e41a1a" stroke-width="1.5"/>
<rect x="1334.3" y="227.0" width="10.2" height="14.1" fill="#e44848" stroke="#e41a1a" stroke-width="1.5"/>
<line x1="1353.0" x2="1353.0" y1="223.9" y2="230.7" stroke="#e41a1a" stroke-width="1.5"/>
<rect x="1347.9" y="225.6" width="10.2" height="2.2" fill="#e44848" stroke="#e41a1a" stroke-width="1.5"/>
</g>
<polyline clip-path="url(#c2)" fill="none" stroke="#ea7a2e" stroke-width="1.5" stroke-linejoin="round" points="52.9,743.9 66.4,749.8 79.9,748.5 93.5,741.2 107.0,736.6 120.6,756.8 134.1,777.8 147.7,761.3 161.2,756.8 174.7,754.9 188.3,764.1 201.8,782.4 215.4,779.7 228.9,782.4 242.5,779.7 256.0,789.7 269.5,805.3 283.1,823.6 296.6,815.7 310.2,834.6 323.7,821.8 337.3,809.3 350.8,806.3 364.3,802.9 377.9,810.9 391.4,815.9 405.0,801.3 418.5,807.5 432.1,815.5 445.6,828.5 459.1,826.5 472.7,840.7 486.2,855.1 499.8,853.3 513.3,858.3 526.9,880.7 540.4,893.8 553.9,911.6 567.5,928.3 581.0,909.3 594.6,892.2 608.1,912.1 621.7,917.3 635.2,907.5 648.7,909.3 662.3,931.1 675.8,920.1 689.4,924.7 702.9,931.1 716.5,920.1 730.0,911.6 743.5,900.2 757.1,872.0 770.6,876.6 784.2,883.0 797.7,880.7 811.3,876.6 824.8,861.3 838.4,850.3 851.9,848.2 865.4,836.1 879.0,828.5 892.5,825.1 906.1,823.0 919.6,806.3 933.2,807.9 946.7,821.2 960.2,833.1 973.8,840.7 987.3,835.6 1000.9,855.5 1014.4,870.4 1028.0,876.6 1041.5,873.2 1055.0,870.4 1068.6,876.6 1082.1,876.6 1095.7,849.8 1109.2,865.6 1122.8,865.6 1136.3,889.2 1149.8,880.7 1163.4,865.4 1176.9,868.6 1190.5,876.6 1204.0,878.4 1217.6,878.4 1231.1,867.4 1244.6,859.4 1258.2,862.9 1271.7,854.9 1285.3,851.6 1298.8,837.7 1312.4,837.7 1325.9,848.2 1339.4,835.6 1353.0,842.3"/>
<polyline clip-path="url(#c2)" fill="none" stroke="#a52bf0" stroke-width="1.5" stroke-linejoin="round" points="52.9,884.1 66.4,892.1 79.9,901.1 93.5,915.2 107.0,903.3 120.6,929.6 134.1,956.2 147.7,936.0 161.2,949.8 174.7,936.0 188.3,940.8 201.8,953.0 215.4,961.0 228.9,939.5 242.5,918.7 256.0,941.8 269.5,953.0 283.1,972.2 296.6,962.6 310.2,949.8 323.7,951.4 337.3,953.1 350.8,959.2 364.3,950.1 377.9,948.2 391.4,937.5 405.0,928.3 418.5,932.9 432.1,937.5 445.6,937.5 459.1,937.5 472.7,959.7 486.2,965.9 499.8,965.9 513.3,976.4 526.9,976.4 540.4,994.0 553.9,1006.2 567.5,1020.4 581.0,996.3 594.6,979.8 608.1,992.2 621.7,976.4 635.2,973.4 648.7,950.1 662.3,960.8 675.8,945.3 689.4,954.4 702.9,963.6 716.5,945.3 730.0,957.9 743.5,950.5 757.1,942.1 770.6,913.9 784.2,921.9 797.7,923.8 811.3,928.1 824.8,926.5 838.4,923.5 851.9,931.1 865.4,939.1 879.0,932.2 892.5,924.9 906.1,926.5 919.6,898.6 933.2,900.2 946.7,909.8 960.2,923.5 973.8,921.9 987.3,918.7 1000.9,931.1 1014.4,931.1 1028.0,956.3 1041.5,962.7 1055.0,960.8 1068.6,945.3 1082.1,962.4 1095.7,968.8 1109.2,943.7 1122.8,945.3 1136.3,948.7 1149.8,947.1 1163.4,948.7 1176.9,953.3 1190.5,942.1 1204.0,947.1 1217.6,954.9 1231.1,953.3 1244.6,943.7 1258.2,945.3 1271.7,939.1 1285.3,934.5 1298.8,916.9 1312.4,920.1 1325.9,921.9 1339.4,918.7 1353.0,921.9"/>
<rect x="62" y="183.4" width="1352" height="502.9" fill="none" stroke="#000" stroke-width="1.7"/>
<rect x="62" y="707.1" width="1352" height="339.4" fill="none" stroke="#000" stroke-width="1.7"/>
<rect x="461" y="196" width="36" height="843" fill="none" stroke="#41719c" stroke-width="5.6"/>
<rect x="739" y="197.5" width="36.3" height="842.7" fill="none" stroke="#41719c" stroke-width="5.6"/>
<rect x="308.5" y="575" width="134.7" height="84" fill="#fff" stroke="#41719c" stroke-width="1.6"/>
<rect x="808.8" y="576.3" width="134.5" height="83.7" fill="#fff" stroke="#41719c" stroke-width="1.6"/>
<rect x="78.3" y="203" width="249.5" height="31" fill="#4a7365" fill-opacity="0.95"/>
<rect x="78.3" y="233.8" width="249.5" height="132.5" fill="#424280" fill-opacity="0.95"/>
<rect x="78.3" y="713.7" width="249.5" height="31.2" fill="#4a7365" fill-opacity="0.88"/>
<rect x="78.3" y="744.9" width="249.5" height="62" fill="#424280" fill-opacity="0.95"/>
<rect x="95.3" y="754.4" width="14" height="14" fill="#a01ef0"/>
<rect x="95.3" y="785.6" width="14" height="14" fill="#ea6a18"/>
</svg>
<span class="tx" style="left:47.1px;top:15.9px;font-size:17.5px;line-height:17.5px;color:#000;font-family:'Liberation Sans','Noto Sans CJK JP',sans-serif;font-weight:400;z-index:5;transform:scaleX(0.7261)">チャート</span>
<span class="tx" style="left:103.2px;top:15.9px;font-size:17.5px;line-height:17.5px;color:#000;font-family:'Liberation Sans','Noto Sans CJK JP',sans-serif;font-weight:400;z-index:5;transform:scaleX(0.6154)">:</span>
<span class="tx" style="left:113.4px;top:15.9px;font-size:17.5px;line-height:17.5px;color:#000;font-family:'Liberation Sans','Noto Sans CJK JP',sans-serif;font-weight:400;z-index:5;transform:scaleX(0.9174)">USD/JPY</span>
<span class="tx" style="left:190.1px;top:15.9px;font-size:17.5px;line-height:17.5px;color:#000;font-family:'Liberation Sans','Noto Sans CJK JP',sans-serif;font-weight:400;z-index:5;transform:scaleX(0.9229)">日足</span>
<span class="tx" style="left:231.3px;top:15.9px;font-size:17.5px;line-height:17.5px;color:#000;font-family:'Liberation Sans','Noto Sans CJK JP',sans-serif;font-weight:400;z-index:5;transform:scaleX(0.7457)">ローソク</span>
<span class="tx" style="left:285.7px;top:15.9px;font-size:17.5px;line-height:17.5px;color:#000;font-family:'Liberation Sans','Noto Sans CJK JP',sans-serif;font-weight:400;z-index:5;transform:scaleX(0.9111)">(BID)</span>
<span class="tx g" style="left:60.4px;top:106.7px;font-size:20px;line-height:20px;color:#000;font-family:'Liberation Sans','IPAGothic',sans-serif;font-weight:400;z-index:5;transform:scaleX(0.8879)">USD/JPY</span>
<span class="tx g" style="left:187.5px;top:106.9px;font-size:19.5px;line-height:19.5px;color:#000;font-family:'Liberation Sans','IPAGothic',sans-serif;font-weight:400;z-index:5;transform:scaleX(0.9231)">日足</span>
<span class="tx g" style="left:295.0px;top:106.9px;font-size:19.5px;line-height:19.5px;color:#000;font-family:'Liberation Sans','IPAGothic',sans-serif;font-weight:400;z-index:5;transform:scaleX(0.7733)">ローソク(BID)</span>
<span class="tx g" style="left:496.2px;top:106.7px;font-size:20px;line-height:20px;color:#000;font-family:'Liberation Sans','IPAGothic',sans-serif;font-weight:400;z-index:5;transform:scaleX(1.1326)">/</span>
<span class="tx g" style="left:525.2px;top:106.7px;font-size:20px;line-height:20px;color:#000;font-family:'Liberation Sans','IPAGothic',sans-serif;font-weight:400;z-index:5;transform:scaleX(1.1326)">/</span>
<span class="tx g" style="left:606.0px;top:107.7px;font-size:19px;line-height:19px;color:#9b9b9b;font-family:'Liberation Sans','IPAGothic',sans-serif;font-weight:400;z-index:5;transform:scaleX(0.9737)">検索</span>
<span class="tx g" style="left:273.0px;top:163.3px;font-size:18.8px;line-height:18.8px;color:#000;font-family:'Liberation Sans','IPAGothic',sans-serif;font-weight:400;z-index:5;transform:scaleX(0.9427)">2022/07</span>
<span class="tx g" style="left:557.0px;top:163.3px;font-size:18.8px;line-height:18.8px;color:#000;font-family:'Liberation Sans','IPAGothic',sans-serif;font-weight:400;z-index:5;transform:scaleX(0.9427)">2022/08</span>
<span class="tx g" style="left:869.5px;top:163.3px;font-size:18.8px;line-height:18.8px;color:#000;font-family:'Liberation Sans','IPAGothic',sans-serif;font-weight:400;z-index:5;transform:scaleX(0.9427)">2022/09</span>
<span class="tx g" style="left:1169.5px;top:163.3px;font-size:18.8px;line-height:18.8px;color:#000;font-family:'Liberation Sans','IPAGothic',sans-serif;font-weight:400;z-index:5;transform:scaleX(0.9427)">2022/10</span>
<span class="tx g" style="left:94.7px;top:210.2px;font-size:18.8px;line-height:18.8px;color:#fff;font-family:'Liberation Sans','IPAGothic',sans-serif;font-weight:400;z-index:8;transform:scaleX(0.9787)">2022/10/03</span>
<span class="tx g" style="left:268.5px;top:212.6px;font-size:14px;line-height:14px;color:#fff;font-family:'Liberation Sans','IPAGothic',sans-serif;font-weight:400;z-index:8;transform:scaleX(1.0382)">−</span>
<span class="tx g" style="left:300.5px;top:211.2px;font-size:17px;line-height:17px;color:#fff;font-family:'Liberation Sans','IPAGothic',sans-serif;font-weight:400;z-index:8;transform:scaleX(1.0063)">×</span>
<span class="tx g" style="left:123.9px;top:241.6px;font-size:19.5px;line-height:19.5px;color:#fff;font-family:'Liberation Sans','IPAGothic',sans-serif;font-weight:400;z-index:8;transform:scaleX(0.9615)">始値</span>
<span class="tx g" style="left:255.4px;top:242.0px;font-size:18.8px;line-height:18.8px;color:#fff;font-family:'Liberation Sans','IPAGothic',sans-serif;font-weight:400;z-index:8;transform:scaleX(0.8190)">144.645</span>
<span class="tx g" style="left:123.9px;top:272.6px;font-size:19.5px;line-height:19.5px;color:#fff;font-family:'Liberation Sans','IPAGothic',sans-serif;font-weight:400;z-index:8;transform:scaleX(0.9615)">高値</span>
<span class="tx g" style="left:255.4px;top:273.0px;font-size:18.8px;line-height:18.8px;color:#fff;font-family:'Liberation Sans','IPAGothic',sans-serif;font-weight:400;z-index:8;transform:scaleX(0.8190)">145.297</span>
<span class="tx g" style="left:123.9px;top:303.6px;font-size:19.5px;line-height:19.5px;color:#fff;font-family:'Liberation Sans','IPAGothic',sans-serif;font-weight:400;z-index:8;transform:scaleX(0.9615)">安値</span>
<span class="tx g" style="left:255.4px;top:304.0px;font-size:18.8px;line-height:18.8px;color:#fff;font-family:'Liberation Sans','IPAGothic',sans-serif;font-weight:400;z-index:8;transform:scaleX(0.8190)">144.143</span>
<span class="tx g" style="left:123.9px;top:334.6px;font-size:19.5px;line-height:19.5px;color:#fff;font-family:'Liberation Sans','IPAGothic',sans-serif;font-weight:400;z-index:8;transform:scaleX(0.9615)">終値</span>
<span class="tx g" style="left:255.4px;top:335.0px;font-size:18.8px;line-height:18.8px;color:#fff;font-family:'Liberation Sans','IPAGothic',sans-serif;font-weight:400;z-index:8;transform:scaleX(0.8190)">144.564</span>
<span class="tx g" style="left:1437.3px;top:643.2px;font-size:18.8px;line-height:18.8px;color:#000;font-family:'Liberation Sans','IPAGothic',sans-serif;font-weight:400;z-index:5;transform:scaleX(0.8307)">130.000</span>
<span class="tx g" style="left:1437.3px;top:600.3px;font-size:18.8px;line-height:18.8px;color:#000;font-family:'Liberation Sans','IPAGothic',sans-serif;font-weight:400;z-index:5;transform:scaleX(0.8307)">132.000</span>
<span class="tx g" style="left:1437.3px;top:557.4px;font-size:18.8px;line-height:18.8px;color:#000;font-family:'Liberation Sans','IPAGothic',sans-serif;font-weight:400;z-index:5;transform:scaleX(0.8307)">134.000</span>
<span class="tx g" style="left:1437.3px;top:514.5px;font-size:18.8px;line-height:18.8px;color:#000;font-family:'Liberation Sans','IPAGothic',sans-serif;font-weight:400;z-index:5;transform:scaleX(0.8307)">136.000</span>
<span class="tx g" style="left:1437.3px;top:471.6px;font-size:18.8px;line-height:18.8px;color:#000;font-family:'Liberation Sans','IPAGothic',sans-serif;font-weight:400;z-index:5;transform:scaleX(0.8307)">138.000</span>
<span class="tx g" style="left:1437.3px;top:428.7px;font-size:18.8px;line-height:18.8px;color:#000;font-family:'Liberation Sans','IPAGothic',sans-serif;font-weight:400;z-index:5;transform:scaleX(0.8307)">140.000</span>
<span class="tx g" style="left:1437.3px;top:385.8px;font-size:18.8px;line-height:18.8px;color:#000;font-family:'Liberation Sans','IPAGothic',sans-serif;font-weight:400;z-index:5;transform:scaleX(0.8307)">142.000</span>
<span class="tx g" style="left:1437.3px;top:342.9px;font-size:18.8px;line-height:18.8px;color:#000;font-family:'Liberation Sans','IPAGothic',sans-serif;font-weight:400;z-index:5;transform:scaleX(0.8307)">144.000</span>
<span class="tx g" style="left:1437.3px;top:300.0px;font-size:18.8px;line-height:18.8px;color:#000;font-family:'Liberation Sans','IPAGothic',sans-serif;font-weight:400;z-index:5;transform:scaleX(0.8307)">146.000</span>
<span class="tx g" style="left:1437.3px;top:257.1px;font-size:18.8px;line-height:18.8px;color:#000;font-family:'Liberation Sans','IPAGothic',sans-serif;font-weight:400;z-index:5;transform:scaleX(0.8307)">148.000</span>
<span class="tx g" style="left:1437.3px;top:216.8px;font-size:18.8px;line-height:18.8px;color:#fff;font-family:'Liberation Sans','IPAGothic',sans-serif;font-weight:400;z-index:5;transform:scaleX(0.8307)">149.942</span>
<span class="tx g" style="left:1433.0px;top:755.6px;font-size:18.8px;line-height:18.8px;color:#000;font-family:'Liberation Sans','IPAGothic',sans-serif;font-weight:400;z-index:5;transform:scaleX(0.8447)">115.0000</span>
<span class="tx g" style="left:1433.0px;top:819.6px;font-size:18.8px;line-height:18.8px;color:#000;font-family:'Liberation Sans','IPAGothic',sans-serif;font-weight:400;z-index:5;transform:scaleX(0.8447)">110.0000</span>
<span class="tx g" style="left:1433.0px;top:883.6px;font-size:18.8px;line-height:18.8px;color:#000;font-family:'Liberation Sans','IPAGothic',sans-serif;font-weight:400;z-index:5;transform:scaleX(0.8297)">105.0000</span>
<span class="tx g" style="left:1433.0px;top:947.6px;font-size:18.8px;line-height:18.8px;color:#000;font-family:'Liberation Sans','IPAGothic',sans-serif;font-weight:400;z-index:5;transform:scaleX(0.8297)">100.0000</span>
<span class="tx g" style="left:1436.0px;top:1011.6px;font-size:18.8px;line-height:18.8px;color:#000;font-family:'Liberation Sans','IPAGothic',sans-serif;font-weight:400;z-index:5;transform:scaleX(0.8396)">95.0000</span>
<span class="tx g" style="left:371.5px;top:435.1px;font-size:18.7px;line-height:18.7px;color:#f0143c;font-family:'Liberation Sans','IPAGothic',sans-serif;font-weight:400;z-index:3;transform:scaleX(0.9991)">139.393</span>
<span class="tx g" style="left:548.0px;top:653.8px;font-size:18.7px;line-height:18.7px;color:#2b90ea;font-family:'Liberation Sans','IPAGothic',sans-serif;font-weight:400;z-index:3;transform:scaleX(0.9991)">130.382</span>
<span class="tx g" style="left:1318.5px;top:208.8px;font-size:18.7px;line-height:18.7px;color:#f0143c;font-family:'Liberation Sans','IPAGothic',sans-serif;font-weight:400;z-index:3;transform:scaleX(1.0213)">149.975</span>
<span class="tx" style="left:334.5px;top:595.0px;font-size:46px;line-height:46px;color:#000;font-family:'Liberation Sans','Noto Sans CJK JP',sans-serif;font-weight:500;z-index:7;transform:scaleX(0.8913)">売り</span>
<span class="tx" style="left:831.7px;top:596.0px;font-size:46px;line-height:46px;color:#000;font-family:'Liberation Sans','Noto Sans CJK JP',sans-serif;font-weight:500;z-index:7;transform:scaleX(0.9783)">買い</span>
<span class="tx" style="left:94.4px;top:721.4px;font-size:17.5px;line-height:17.5px;color:#fff;font-family:'Liberation Sans','Noto Sans CJK JP',sans-serif;font-weight:400;z-index:8;transform:scaleX(0.9514)">ROC</span>
<span class="tx g" style="left:268.5px;top:723.1px;font-size:14px;line-height:14px;color:#fff;font-family:'Liberation Sans','IPAGothic',sans-serif;font-weight:400;z-index:8;transform:scaleX(1.0382)">−</span>
<span class="tx g" style="left:300.5px;top:721.7px;font-size:17px;line-height:17px;color:#fff;font-family:'Liberation Sans','IPAGothic',sans-serif;font-weight:400;z-index:8;transform:scaleX(1.0063)">×</span>
<span class="tx g" style="left:116.4px;top:751.4px;font-size:19.5px;line-height:19.5px;color:#fff;font-family:'Liberation Sans','IPAGothic',sans-serif;font-weight:400;z-index:8;transform:scaleX(0.9804)">短期[9]</span>
<span class="tx g" style="left:116.4px;top:782.9px;font-size:19.5px;line-height:19.5px;color:#fff;font-family:'Liberation Sans','IPAGothic',sans-serif;font-weight:400;z-index:8;transform:scaleX(0.9604)">長期[72]</span>
<span class="tx g" style="left:246.4px;top:751.8px;font-size:18.8px;line-height:18.8px;color:#fff;font-family:'Liberation Sans','IPAGothic',sans-serif;font-weight:400;z-index:8;transform:scaleX(0.8182)">100.3554</span>
<span class="tx g" style="left:246.4px;top:783.3px;font-size:18.8px;line-height:18.8px;color:#fff;font-family:'Liberation Sans','IPAGothic',sans-serif;font-weight:400;z-index:8;transform:scaleX(0.8182)">106.9308</span>
<span class="tx g" style="left:61.2px;top:1057.0px;font-size:19.5px;line-height:19.5px;color:#000;font-family:'Liberation Sans','IPAGothic',sans-serif;font-weight:400;z-index:5;transform:scaleX(0.9342)">始値:</span>
<span class="tx g" style="left:105.0px;top:1056.8px;font-size:18.8px;line-height:18.8px;color:#000;font-family:'Liberation Sans','IPAGothic',sans-serif;font-weight:400;z-index:5;transform:scaleX(0.8352)">149.866</span>
<span class="tx g" style="left:179.8px;top:1057.0px;font-size:19.5px;line-height:19.5px;color:#000;font-family:'Liberation Sans','IPAGothic',sans-serif;font-weight:400;z-index:5;transform:scaleX(0.9342)">高値:</span>
<span class="tx g" style="left:223.6px;top:1056.8px;font-size:18.8px;line-height:18.8px;color:#000;font-family:'Liberation Sans','IPAGothic',sans-serif;font-weight:400;z-index:5;transform:scaleX(0.8352)">149.975</span>
<span class="tx g" style="left:298.4px;top:1057.0px;font-size:19.5px;line-height:19.5px;color:#000;font-family:'Liberation Sans','IPAGothic',sans-serif;font-weight:400;z-index:5;transform:scaleX(0.9342)">安値:</span>
<span class="tx g" style="left:342.2px;top:1056.8px;font-size:18.8px;line-height:18.8px;color:#000;font-family:'Liberation Sans','IPAGothic',sans-serif;font-weight:400;z-index:5;transform:scaleX(0.8352)">149.736</span>
<span class="tx g" style="left:417.0px;top:1057.0px;font-size:19.5px;line-height:19.5px;color:#000;font-family:'Liberation Sans','IPAGothic',sans-serif;font-weight:400;z-index:5;transform:scaleX(0.9342)">終値:</span>
<span class="tx g" style="left:460.8px;top:1056.8px;font-size:18.8px;line-height:18.8px;color:#000;font-family:'Liberation Sans','IPAGothic',sans-serif;font-weight:400;z-index:5;transform:scaleX(0.8352)">149.942</span>
<span class="tx g" style="left:1381.0px;top:1056.5px;font-size:18.8px;line-height:18.8px;color:#000;font-family:'Liberation Sans','IPAGothic',sans-serif;font-weight:400;z-index:5;transform:scaleX(0.7848)">100</span>
<span class="tx g" style="left:1327.0px;top:58.7px;font-size:21px;line-height:21px;color:#333;font-family:'Liberation Sans','IPAGothic',sans-serif;font-weight:700;z-index:5;transform:scaleX(0.9510)">?</span>
<span class="tx g" style="left:1370.7px;top:62.9px;font-size:12.5px;line-height:12.5px;color:#333;font-family:'Liberation Sans','IPAGothic',sans-serif;font-weight:700;z-index:5;transform:scaleX(0.8285)">MENU</span>
<span class="tx g" style="left:17.8px;top:223.8px;font-size:12.3px;line-height:12.3px;color:#111;font-family:'Liberation Sans','IPAGothic',sans-serif;font-weight:700;z-index:5;transform:scaleX(0.8575)">ALL</span>
<span class="tx g" style="left:22.3px;top:378.3px;font-size:9.5px;line-height:9.5px;color:#222;font-family:'Liberation Sans','IPAGothic',sans-serif;font-weight:700;z-index:5;transform:scaleX(0.9838)">70.0</span>
<span class="tx g" style="left:22.3px;top:389.3px;font-size:9.5px;line-height:9.5px;color:#222;font-family:'Liberation Sans','IPAGothic',sans-serif;font-weight:700;z-index:5;transform:scaleX(0.9838)">60.0</span>
</body></html>
